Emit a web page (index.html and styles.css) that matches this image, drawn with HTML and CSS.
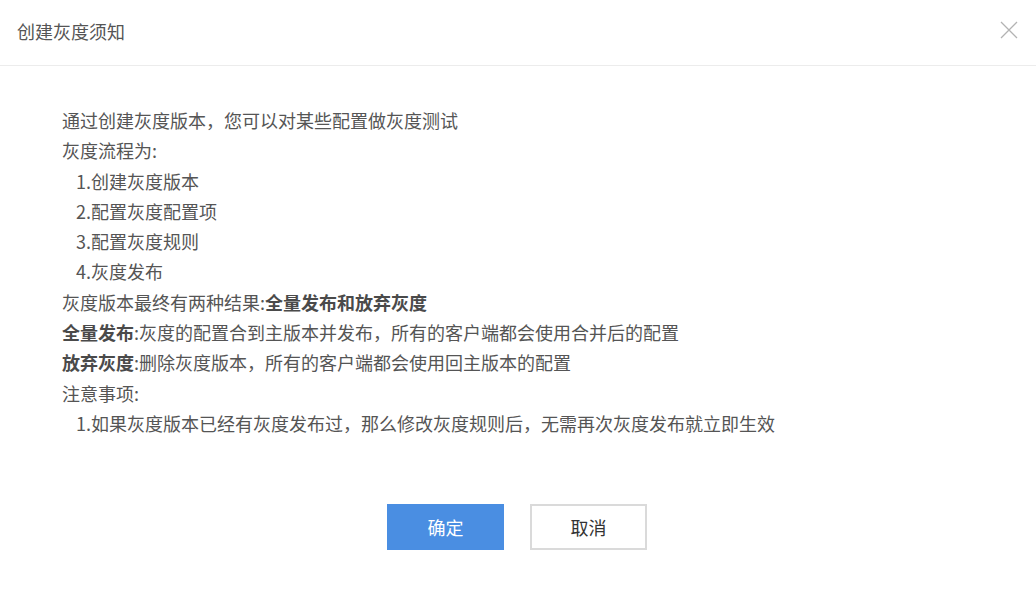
FILE: index.html
```html
<!DOCTYPE html>
<html lang="zh-CN">
<head>
<meta charset="utf-8">
<title>创建灰度须知</title>
<link rel="stylesheet" href="styles.css">
</head>
<body>
<div class="modal">
  <div class="modal-header">
    <div class="modal-title">创建灰度须知</div>
    <button class="close-btn" aria-label="关闭">
      <svg width="18" height="18" viewBox="0 0 18 18"><path d="M1 1L17 17M17 1L1 17" stroke="#b3b3b3" stroke-width="1.3" fill="none"/></svg>
    </button>
  </div>
  <div class="modal-body">
    <div class="line">通过创建灰度版本，您可以对某些配置做灰度测试</div>
    <div class="line">灰度流程为:</div>
    <div class="line indent">1.创建灰度版本</div>
    <div class="line indent">2.配置灰度配置项</div>
    <div class="line indent">3.配置灰度规则</div>
    <div class="line indent">4.灰度发布</div>
    <div class="line">灰度版本最终有两种结果:<b>全量发布和放弃灰度</b></div>
    <div class="line"><b>全量发布</b>:灰度的配置合到主版本并发布，所有的客户端都会使用合并后的配置</div>
    <div class="line"><b>放弃灰度</b>:删除灰度版本，所有的客户端都会使用回主版本的配置</div>
    <div class="line">注意事项:</div>
    <div class="line indent">1.如果灰度版本已经有灰度发布过，那么修改灰度规则后，无需再次灰度发布就立即生效</div>
  </div>
  <div class="modal-footer">
    <button class="btn btn-primary">确定</button>
    <button class="btn btn-default">取消</button>
  </div>
</div>
</body>
</html>
```
FILE: styles.css
```css
html, body {
  margin: 0;
  padding: 0;
  background: #ffffff;
}
body {
  font-family: "PingFang SC", "Noto Sans CJK SC", "Noto Sans", sans-serif;
  color: #555555;
}
.modal {
  width: 1036px;
}
.modal-header {
  height: 66px;
  border-bottom: 1px solid #ececec;
  display: flex;
  align-items: center;
  justify-content: space-between;
  padding: 0 17px;
  box-sizing: border-box;
}
.modal-title {
  font-size: 18px;
  line-height: 24px;
  color: #555;
  margin-top: -4px;
}
.close-btn {
  border: 0;
  background: none;
  padding: 0;
  width: 18px;
  height: 18px;
  margin-right: 1px;
  margin-top: -6px;
  display: flex;
  cursor: pointer;
}
.modal-body {
  padding: 39px 62px 0;
  font-size: 18px;
  line-height: 30.3px;
}
.line {
  white-space: nowrap;
}
.line b {
  font-weight: 700;
  color: #4a4a4a;
}
.indent {
  padding-left: 14px;
}
.modal-footer {
  display: flex;
  justify-content: center;
  gap: 26px;
  margin-top: 66px;
  padding-right: 2px;
}
.btn {
  width: 117px;
  height: 46px;
  font-family: inherit;
  font-size: 18px;
  box-sizing: border-box;
  cursor: pointer;
}
.btn-primary {
  background: #4a8ee2;
  color: #ffffff;
  border: 1px solid #4a8ee2;
}
.btn-default {
  background: #ffffff;
  color: #333333;
  border: 2px solid #dadada;
}
```
